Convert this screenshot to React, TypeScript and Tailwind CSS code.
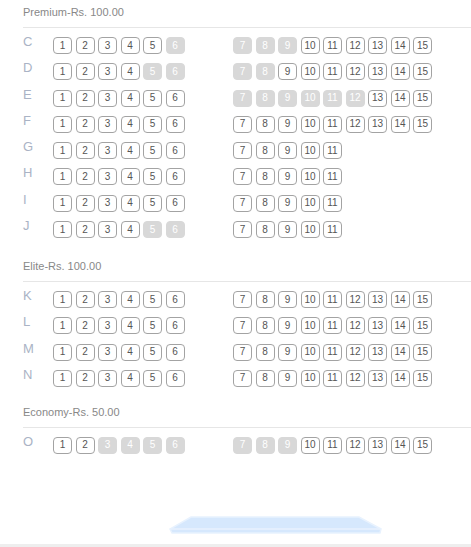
import React from "react";

type Row = {
  label: string;
  left: number[];
  right: number[];
  booked: number[];
};

type Section = {
  title: string;
  gapClass: string;
  rows: Row[];
};

const LEFT = [1, 2, 3, 4, 5, 6];
const FULL = [7, 8, 9, 10, 11, 12, 13, 14, 15];
const SHORT = [7, 8, 9, 10, 11];

const sections: Section[] = [
  {
    title: "Premium-Rs. 100.00",
    gapClass: "",
    rows: [
      { label: "C", left: LEFT, right: FULL, booked: [6, 7, 8, 9] },
      { label: "D", left: LEFT, right: FULL, booked: [5, 6, 7, 8] },
      { label: "E", left: LEFT, right: FULL, booked: [7, 8, 9, 10, 11, 12] },
      { label: "F", left: LEFT, right: FULL, booked: [] },
      { label: "G", left: LEFT, right: SHORT, booked: [] },
      { label: "H", left: LEFT, right: SHORT, booked: [] },
      { label: "I", left: LEFT, right: SHORT, booked: [] },
      { label: "J", left: LEFT, right: SHORT, booked: [5, 6] },
    ],
  },
  {
    title: "Elite-Rs. 100.00",
    gapClass: "mt-[16px]",
    rows: [
      { label: "K", left: LEFT, right: FULL, booked: [] },
      { label: "L", left: LEFT, right: FULL, booked: [] },
      { label: "M", left: LEFT, right: FULL, booked: [] },
      { label: "N", left: LEFT, right: FULL, booked: [] },
    ],
  },
  {
    title: "Economy-Rs. 50.00",
    gapClass: "mt-[13px]",
    rows: [
      { label: "O", left: LEFT, right: FULL, booked: [3, 4, 5, 6, 7, 8, 9] },
    ],
  },
];

function Seat({ num, booked }: { num: number; booked: boolean }) {
  return (
    <div
      className={`w-[19px] h-[17px] rounded-[4px] flex items-center justify-center text-[10px] leading-none ${
        booked
          ? "bg-[#d8d8d8] text-white border border-[#d8d8d8]"
          : "bg-white text-[#555555] border border-[#a3a3a3]"
      }`}
    >
      {num}
    </div>
  );
}

function SeatRow({ row }: { row: Row }) {
  return (
    <div className="flex items-start h-[17px]">
      {/* Row label */}
      <div className="w-[30px] text-[13px] leading-[13px] -mt-[2px] text-[#aab3c5]">
        {row.label}
      </div>

      {/* Left block */}
      <div className="w-[180px] flex gap-[3.5px]">
        {row.left.map((n) => (
          <Seat key={n} num={n} booked={row.booked.includes(n)} />
        ))}
      </div>

      {/* Right block */}
      <div className="flex gap-[3.5px]">
        {row.right.map((n) => (
          <Seat key={n} num={n} booked={row.booked.includes(n)} />
        ))}
      </div>
    </div>
  );
}

function Screen() {
  return (
    <svg width="214" height="19" viewBox="0 0 214 19">
      <polygon
        points="22,1 190,1 212,13 211,17 3,17 1,13"
        fill="#d6e8fd"
        stroke="#e8f2fe"
        strokeWidth="1.5"
      />
      <line x1="2" y1="13" x2="212" y2="13" stroke="#e8f2fe" strokeWidth="1.5" />
    </svg>
  );
}

export default function App() {
  return (
    <div
      className="w-[471px] h-[547px] bg-white flex flex-col overflow-hidden"
      style={{ fontFamily: '"Liberation Sans", Arial, sans-serif' }}
    >
      <div className="pl-[23px]">
        {sections.map((section) => (
          <div key={section.title} className={section.gapClass}>
            {/* Section header */}
            <div className="pt-[4px] pb-[7px] border-b border-[#e6e6e6] text-[11px] leading-[16px] text-[#888888]">
              {section.title}
            </div>

            {/* Rows */}
            <div className="mt-[9px] flex flex-col gap-[9.3px]">
              {section.rows.map((row) => (
                <SeatRow key={row.label} row={row} />
              ))}
            </div>
          </div>
        ))}
      </div>

      {/* Screen */}
      <div className="flex-1 flex items-end pl-[169px] pb-[9px]">
        <Screen />
      </div>
      <div className="h-[3px] bg-[#eeeeee]" />
    </div>
  );
}
